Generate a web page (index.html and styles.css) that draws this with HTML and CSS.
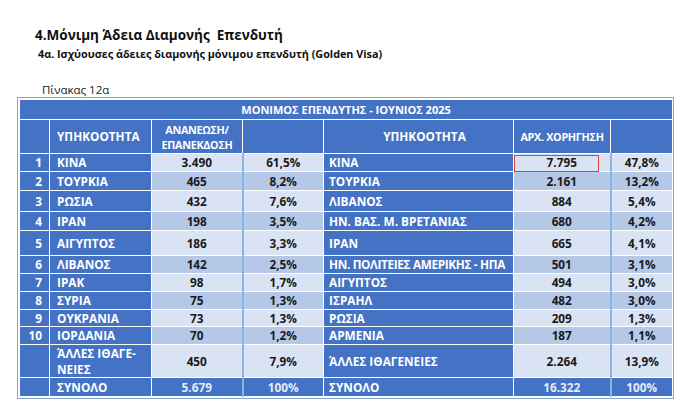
FILE: index.html
```
<!DOCTYPE html>
<html lang="el">
<head>
<meta charset="utf-8">
<link rel="stylesheet" href="styles.css">
</head>
<body>
<div class="page">
  <h1 class="title">4.Μόνιμη Άδεια Διαμονής&nbsp; Επενδυτή</h1>
  <h2 class="subtitle">4α. Ισχύουσες άδειες διαμονής μόνιμου επενδυτή (Golden Visa)</h2>
  <p class="caption">Πίνακας 12α</p>
  <div class="frame">
    <table class="grid">
      <colgroup>
        <col class="c1"><col class="c2"><col class="c3"><col class="c4"><col class="c5"><col class="c6"><col class="c7">
      </colgroup>
      <tr class="r-title"><td colspan="7" class="blue center ttl">ΜΟΝΙΜΟΣ ΕΠΕΝΔΥΤΗΣ - ΙΟΥΝΙΟΣ 2025</td></tr>
      <tr class="r-head">
        <td class="blue"></td>
        <td class="blue name hl">ΥΠΗΚΟΟΤΗΤΑ</td>
        <td class="blue center tight">ΑΝΑΝΕΩΣΗ/<br>ΕΠΑΝΕΚΔΟΣΗ</td>
        <td class="blue"></td>
        <td class="blue center hr">ΥΠΗΚΟΟΤΗΤΑ</td>
        <td class="blue center tight">ΑΡΧ. ΧΟΡΗΓΗΣΗ</td>
        <td class="blue"></td>
      </tr>
      <tr class="h18 odd"><td class="blue num">1</td><td class="blue name">ΚΙΝΑ</td><td class="v sep">3.490</td><td class="v">61,5%</td><td class="blue name2">ΚΙΝΑ</td><td class="v sep mark-cell"><span class="mark"></span>7.795</td><td class="v">47,8%</td></tr>
      <tr class="h19 even"><td class="blue num">2</td><td class="blue name">ΤΟΥΡΚΙΑ</td><td class="v sep">465</td><td class="v">8,2%</td><td class="blue name2">ΤΟΥΡΚΙΑ</td><td class="v sep">2.161</td><td class="v">13,2%</td></tr>
      <tr class="h21 odd"><td class="blue num">3</td><td class="blue name">ΡΩΣΙΑ</td><td class="v sep">432</td><td class="v">7,6%</td><td class="blue name2">ΛΙΒΑΝΟΣ</td><td class="v sep">884</td><td class="v">5,4%</td></tr>
      <tr class="h19 even"><td class="blue num">4</td><td class="blue name">ΙΡΑΝ</td><td class="v sep">198</td><td class="v">3,5%</td><td class="blue name2">ΗΝ. ΒΑΣ. Μ. ΒΡΕΤΑΝΙΑΣ</td><td class="v sep">680</td><td class="v">4,2%</td></tr>
      <tr class="h25 odd"><td class="blue num">5</td><td class="blue name">ΑΙΓΥΠΤΟΣ</td><td class="v sep">186</td><td class="v">3,3%</td><td class="blue name2">ΙΡΑΝ</td><td class="v sep">665</td><td class="v">4,1%</td></tr>
      <tr class="h18 even"><td class="blue num">6</td><td class="blue name">ΛΙΒΑΝΟΣ</td><td class="v sep">142</td><td class="v">2,5%</td><td class="blue name2 long">ΗΝ. ΠΟΛΙΤΕΙΕΣ ΑΜΕΡΙΚΗΣ - ΗΠΑ</td><td class="v sep">501</td><td class="v">3,1%</td></tr>
      <tr class="h18 odd"><td class="blue num">7</td><td class="blue name">ΙΡΑΚ</td><td class="v sep">98</td><td class="v">1,7%</td><td class="blue name2">ΑΙΓΥΠΤΟΣ</td><td class="v sep">494</td><td class="v">3,0%</td></tr>
      <tr class="h18 even"><td class="blue num">8</td><td class="blue name">ΣΥΡΙΑ</td><td class="v sep">75</td><td class="v">1,3%</td><td class="blue name2">ΙΣΡΑΗΛ</td><td class="v sep">482</td><td class="v">3,0%</td></tr>
      <tr class="h17 odd"><td class="blue num">9</td><td class="blue name">ΟΥΚΡΑΝΙΑ</td><td class="v sep">73</td><td class="v">1,3%</td><td class="blue name2">ΡΩΣΙΑ</td><td class="v sep">209</td><td class="v">1,3%</td></tr>
      <tr class="h18 even"><td class="blue num">10</td><td class="blue name">ΙΟΡΔΑΝΙΑ</td><td class="v sep">70</td><td class="v">1,2%</td><td class="blue name2">ΑΡΜΕΝΙΑ</td><td class="v sep">187</td><td class="v">1,1%</td></tr>
      <tr class="h33 odd"><td class="blue num"></td><td class="blue name">ΆΛΛΕΣ ΙΘΑΓΕ-<br>ΝΕΙΕΣ</td><td class="v sep">450</td><td class="v">7,9%</td><td class="blue name2">ΆΛΛΕΣ ΙΘΑΓΕΝΕΙΕΣ</td><td class="v sep">2.264</td><td class="v">13,9%</td></tr>
      <tr class="h19 total"><td class="blue num"></td><td class="blue name">ΣΥΝΟΛΟ</td><td class="blue center tv sep">5.679</td><td class="blue center tv">100%</td><td class="blue name2">ΣΥΝΟΛΟ</td><td class="blue center tv sep">16.322</td><td class="blue center tv">100%</td></tr>
    </table>
  </div>
</div>
</body>
</html>
```
FILE: styles.css
```
html, body {
  margin: 0;
  padding: 0;
  background: #ffffff;
}
.page {
  padding: 26px 0 0 17px;
  font-family: "Open Sans", "Noto Sans", sans-serif;
  color: #111;
}
.title {
  margin: 0 0 0 18px;
  font-size: 13.5px;
  line-height: 18px;
  font-weight: 700;
}
.subtitle {
  margin: 2px 0 0 21px;
  font-size: 10.8px;
  line-height: 16px;
  font-weight: 700;
}
.caption {
  margin: 21px 0 0 25px;
  font-size: 11.5px;
  line-height: 14px;
  font-weight: 400;
  color: #222;
}
.frame {
  margin-top: 0px;
  width: 653px;
  border: 1px solid #7fa6cc;
  padding: 1px;
  background: #ffffff;
}
.grid {
  border-collapse: collapse;
  table-layout: fixed;
  width: 653px;
  font-family: "Open Sans", "Noto Sans", sans-serif;
  font-size: 11.8px;
  font-weight: 700;
}
.c1 { width: 30px; }
.c2 { width: 102px; }
.c3 { width: 91px; }
.c4 { width: 81px; }
.c5 { width: 190px; }
.c6 { width: 97px; }
.c7 { width: 62px; }
.grid td {
  border: 1px solid #ffffff;
  padding: 0;
  line-height: 13px;
  vertical-align: middle;
  white-space: nowrap;
  overflow: visible;
}
.blue {
  background: #4472c4;
  color: #ffffff;
}
.center { text-align: center; }
.grid .ttl { font-size: 11px; }
.r-title td { height: 19px; }
.r-head td { height: 33px; line-height: 15px; }
.grid .tight { font-size: 10.8px; letter-spacing: -0.3px; }
.hl { padding-left: 7px !important; }
.hr { padding-left: 12px !important; }
.num { text-align: right; padding-right: 7px !important; }
.name { padding-left: 7px !important; }
.name2 { padding-left: 5px !important; }
.long { letter-spacing: -0.35px; }
.v {
  text-align: center;
  color: #1a1a1a;
}
.odd .v { background: #dae3f3; }
.even .v { background: #b5c8e8; }
.grid td.sep { border-right: 2px solid #8fb4de; }
.tv { color: #e6ecf8; }
.h17 td { height: 16px; }
.h18 td { height: 17px; }
.h19 td { height: 18px; }
.h21 td { height: 20px; }
.h25 td { height: 24px; }
.h33 td { height: 32px; line-height: 16px; }
.mark-cell { position: relative; }
.mark {
  position: absolute;
  left: 0px;
  top: 1px;
  width: 83px;
  height: 15px;
  border: 1.5px solid #e0413a;
}
```
